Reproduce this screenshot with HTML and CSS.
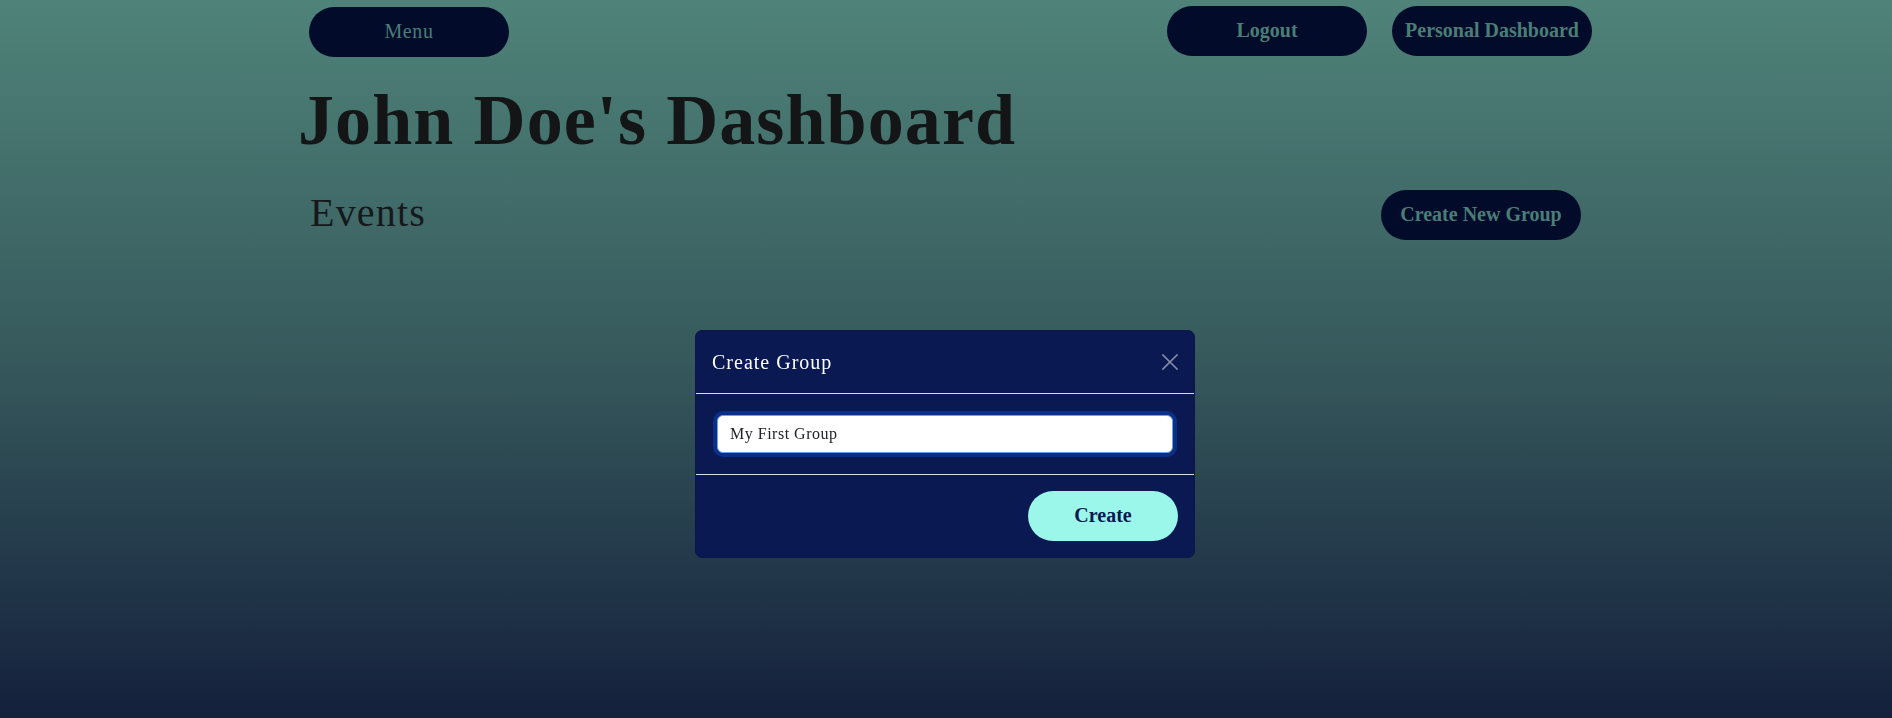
FILE: index.html
```html
<!DOCTYPE html>
<html lang="en">
<head>
<meta charset="utf-8">
<title>John Doe's Dashboard</title>
<link rel="stylesheet" href="styles.css">
</head>
<body>
<div class="page">
  <div class="container">
    <nav class="topbar">
      <button class="pill pill-menu" type="button">Menu</button>
      <div class="topbar-right">
        <button class="pill pill-bold" type="button">Logout</button>
        <button class="pill pill-bold" type="button">Personal Dashboard</button>
      </div>
    </nav>
    <h1 class="title">John Doe's Dashboard</h1>
    <div class="section-row">
      <h2 class="section-title">Events</h2>
      <button class="pill pill-bold" type="button">Create New Group</button>
    </div>
  </div>
</div>

<div class="modal-layer">
  <div class="modal">
    <div class="modal-header">
      <h5 class="modal-title">Create Group</h5>
      <button class="modal-close" type="button" aria-label="Close">
        <svg width="16" height="16" viewBox="0 0 16 16" aria-hidden="true">
          <path d="M1 1 L15 15 M15 1 L1 15" stroke="currentColor" stroke-width="1.6" fill="none" stroke-linecap="square"/>
        </svg>
      </button>
    </div>
    <div class="modal-body">
      <input class="text-input" type="text" value="My First Group">
    </div>
    <div class="modal-footer">
      <button class="create-btn" type="button">Create</button>
    </div>
  </div>
</div>
</body>
</html>
```

FILE: styles.css
```css
* {
  box-sizing: border-box;
}

html, body {
  margin: 0;
  padding: 0;
}

body {
  font-family: "Liberation Serif", "DejaVu Serif", serif;
  background: linear-gradient(180deg, #4f8379 0%, #36595c 50%, #14203c 100%);
  min-height: 718px;
  color: #131517;
}

.page {
  min-height: 718px;
}

.container {
  width: 1296px;
  margin: 0 auto;
}

.topbar {
  display: flex;
  justify-content: space-between;
  align-items: flex-start;
  padding-top: 6px;
}

.topbar-right {
  display: flex;
  gap: 25px;
  margin-right: 2px;
}

.pill {
  width: 200px;
  height: 50px;
  border: none;
  border-radius: 25px;
  background: #020b29;
  color: #4a7e77;
  font-family: "Liberation Serif", "DejaVu Serif", serif;
  font-size: 20px;
  line-height: 1;
  padding: 0 8px 3px 8px;
  white-space: nowrap;
  cursor: pointer;
}

.pill-menu {
  margin-left: 11px;
  margin-top: 1px;
  font-weight: 400;
  letter-spacing: 0.6px;
}

.pill-bold {
  font-weight: 700;
}

.title {
  margin: 20px 0 0 0;
  font-size: 72px;
  line-height: 1.2;
  font-weight: 700;
  letter-spacing: 1.1px;
  color: #131517;
}

.section-row {
  display: flex;
  justify-content: space-between;
  align-items: flex-start;
  padding: 0 13px 0 12px;
  margin-top: 27px;
}

.section-title {
  margin: -1px 0 0 0;
  font-size: 40px;
  line-height: 1.2;
  font-weight: 400;
  letter-spacing: 1.2px;
  color: #16191b;
}

/* Modal overlay */
.modal-layer {
  position: fixed;
  inset: 0;
  display: flex;
  justify-content: center;
  align-items: flex-start;
  padding-top: 330px;
  padding-right: 2px;
}

.modal {
  width: 500px;
  background: #0a1951;
  border: 1px solid #0a1747;
  border-radius: 7px;
  overflow: hidden;
}

.modal-header {
  display: flex;
  justify-content: space-between;
  align-items: center;
  padding: 16px;
  border-bottom: 1px solid #d9dce6;
}

.modal-title {
  margin: 0;
  font-size: 20px;
  line-height: 30px;
  font-weight: 400;
  letter-spacing: 1px;
  color: #ffffff;
}

.modal-close {
  width: 16px;
  height: 16px;
  padding: 0;
  border: none;
  background: transparent;
  color: #868ca8;
  display: flex;
  cursor: pointer;
}

.modal-body {
  padding: 21px;
}

.text-input {
  display: block;
  width: 100%;
  height: 38px;
  padding: 0 12px;
  border: 1px solid #6f9fe8;
  border-radius: 6px;
  background: #ffffff;
  box-shadow: 0 0 0 4px #0b2f86;
  outline: none;
  font-family: "Liberation Serif", "DejaVu Serif", serif;
  font-size: 16px;
  letter-spacing: 0.5px;
  color: #212529;
}

.modal-footer {
  display: flex;
  justify-content: flex-end;
  padding: 16px;
  border-top: 1px solid #d9dce6;
}

.create-btn {
  width: 150px;
  height: 50px;
  border: none;
  border-radius: 25px;
  background: #9af7e9;
  color: #0a1951;
  font-family: "Liberation Serif", "DejaVu Serif", serif;
  font-size: 20px;
  font-weight: 700;
  padding-bottom: 3px;
  cursor: pointer;
}
```
